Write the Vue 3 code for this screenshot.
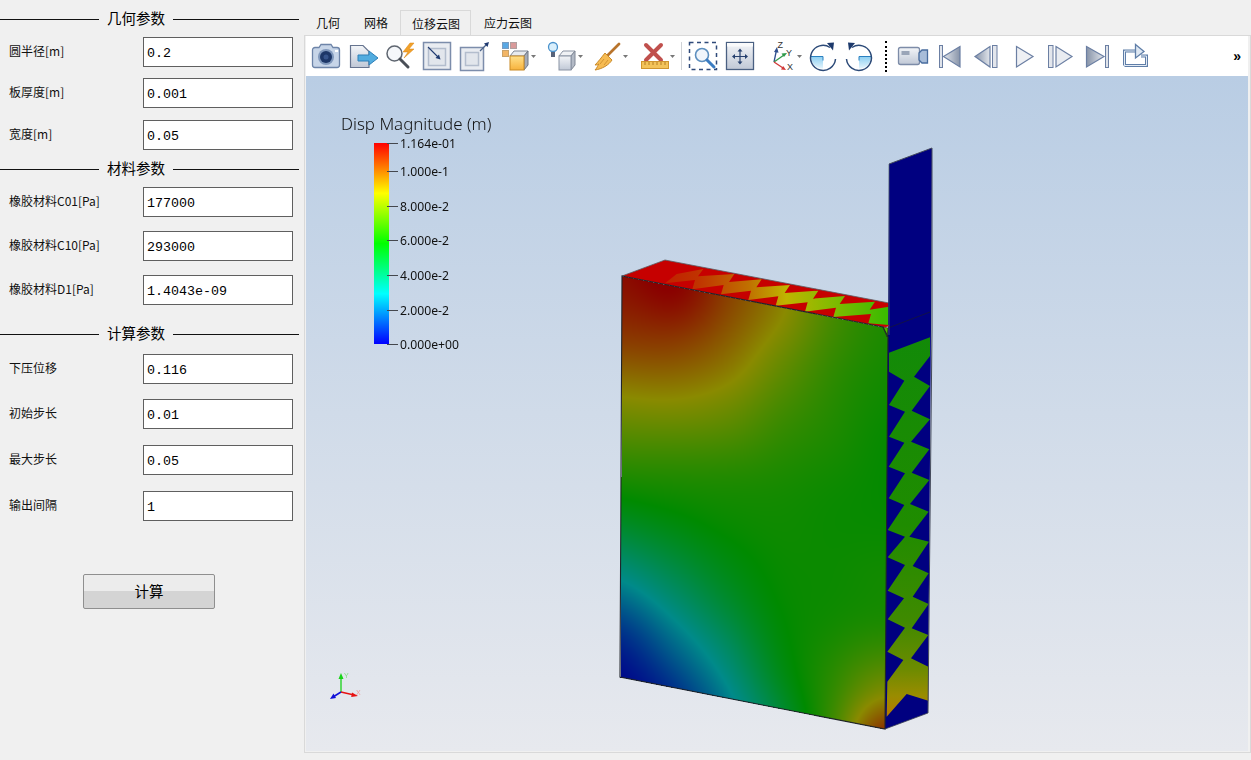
<template>
  <div class="app">
    <aside class="side">
      <template v-for="(g, gi) in groups" :key="gi">
        <h3 :class="['heading', g.cls]"><span>{{ g.title }}</span></h3>
        <div :class="['fields', g.cls]">
          <div v-for="f in g.fields" :key="f.label" class="row">
            <label class="lbl">{{ f.label }}</label>
            <div class="input"><span>{{ f.value }}</span></div>
          </div>
        </div>
      </template>
      <button class="calc" type="button">计算</button>
    </aside>

    <main class="right">
      <nav class="tabs">
        <div v-for="t in tabs" :key="t" :class="['tab', { active: t === '位移云图' }]">{{ t }}</div>
      </nav>
      <div class="pane">
        <div class="toolbar">
          <svg class="defs" width="0" height="0">
            <defs>
              <linearGradient id="steel" x1="0" y1="0" x2="0" y2="1">
                <stop offset="0" stop-color="#f3f5f8" />
                <stop offset="1" stop-color="#c0c8d6" />
              </linearGradient>
              <linearGradient id="darkSteel" x1="1" y1="0" x2="0" y2="0">
                <stop offset="0" stop-color="#e2e6ec" />
                <stop offset="1" stop-color="#8793a8" />
              </linearGradient>
              <linearGradient id="darkSteelR" x1="0" y1="0" x2="1" y2="0">
                <stop offset="0" stop-color="#e2e6ec" />
                <stop offset="1" stop-color="#8793a8" />
              </linearGradient>
              <linearGradient id="amber" x1="0" y1="0" x2="0" y2="1">
                <stop offset="0" stop-color="#ffe08a" />
                <stop offset="1" stop-color="#f7b23c" />
              </linearGradient>
              <linearGradient id="wedge" x1="0" y1="0" x2="0" y2="1">
                <stop offset="0" stop-color="#8fd0f2" />
                <stop offset="1" stop-color="#e4f4fc" />
              </linearGradient>
            </defs>
          </svg>

          <!-- camera -->
          <svg class="tb" width="37" height="40">
            <path d="M4.500 14a2.500 2.500 0 0 1 2.500-2.500h4l2-3h10l2 3h4a2.500 2.500 0 0 1 2.500 2.500v15a2.500 2.500 0 0 1-2.500 2.500H7a2.500 2.500 0 0 1-2.500-2.500Z" fill="#c7d5e8" stroke="#6d84a8" stroke-width="1.300" />
            <circle cx="18" cy="21" r="8" fill="#7f97bb" />
            <circle cx="18" cy="21" r="6" fill="#1d3768" />
            <circle cx="18" cy="21" r="2.500" fill="#37558c" />
            <rect x="27" y="14" width="3" height="2" fill="#fff" />
          </svg>
          <!-- export -->
          <svg class="tb" width="37" height="40">
            <path d="M5.500 9.500H18l6 6v16H5.500Z" fill="url(#steel)" stroke="#66748f" stroke-width="1.200" />
            <path d="M13 19h11v-4l9 7-9 7v-4H13Z" fill="#52acdf" stroke="#2f80b8" />
          </svg>
          <!-- find data -->
          <svg class="tb" width="37" height="40">
            <circle cx="12.500" cy="17.500" r="7.500" fill="#f5f7fa" stroke="#5f6670" stroke-width="1.500" />
            <path d="M18 23l8 8" stroke="#4a4f57" stroke-width="3" stroke-linecap="round" />
            <path d="M28 7l-7 9h5l-4 6 10-9h-5l5-6Z" fill="#f2a12a" stroke="#d98616" stroke-width=".5" />
          </svg>
          <!-- reset zoom in -->
          <svg class="tb" width="37" height="40">
            <rect x="4.500" y="6.500" width="27" height="27" fill="#e9ecf1" stroke="#7c8dab" stroke-width="1.500" />
            <rect x="9.500" y="12.500" width="17" height="17" fill="#e2e6ec" stroke="#b3bdcd" stroke-width="1.500" />
            <path d="M9 11l10 10" stroke="#1f3a70" stroke-width="1.100" />
            <path d="M21.500 23.500l-5-1.500 3.500-3.500Z" fill="#1f3a70" />
          </svg>
          <!-- reset zoom out -->
          <svg class="tb" width="37" height="40">
            <rect x="4.500" y="11.500" width="23" height="23" fill="#e9ecf1" stroke="#7c8dab" stroke-width="1.500" />
            <rect x="9.500" y="16.500" width="13" height="13" fill="#e2e6ec" stroke="#b3bdcd" stroke-width="1.500" />
            <path d="M24 15l6-6" stroke="#4a6288" stroke-width="1.200" />
            <path d="M33 6l-1.500 5-3.500-3.500Z" fill="#1f3a70" />
          </svg>
          <!-- cube with colored cells -->
          <svg class="tb" width="46" height="40">
            <rect x="9.500" y="6.500" width="6" height="6" fill="#59a8e4" stroke="#7a9cc0" />
            <rect x="17.500" y="6.500" width="6" height="6" fill="#d99a9a" stroke="#b0a0a0" />
            <rect x="9.500" y="14.500" width="6" height="6" fill="#f2b565" stroke="#c9a26a" />
            <path d="M17 20l4-5h14l-4 5Z" fill="#e8ebef" stroke="#7f8796" />
            <path d="M31 20l4-5v14l-4 5Z" fill="#a4abb8" stroke="#6f7684" />
            <rect x="17" y="20" width="14" height="14" fill="url(#amber)" stroke="#c98a24" />
            <path d="M38 19h5l-2.500 3Z" fill="#777" />
          </svg>
          <!-- light with cube -->
          <svg class="tb" width="46" height="40">
            <circle cx="14" cy="11" r="4.500" fill="#d9effc" stroke="#4a92cc" stroke-width="1.300" />
            <rect x="12" y="16" width="4" height="5" fill="#57637a" />
            <path d="M20 20l4-5h12l-4 5Z" fill="#f0f2f5" stroke="#8a93a3" />
            <path d="M32 20l4-5v14l-4 5Z" fill="#b3bac6" stroke="#808896" />
            <rect x="20" y="20" width="12" height="14" fill="url(#steel)" stroke="#8a93a3" />
            <path d="M39 19h5l-2.500 3Z" fill="#777" />
          </svg>
          <!-- broom -->
          <svg class="tb" width="46" height="40">
            <path d="M34 8L23 19" stroke="#b8742c" stroke-width="2.800" stroke-linecap="round" />
            <path d="M20 17l7 7c-3 5-10 9-17 10 3-3 2-4 4-6-2 1-3 1-4 1 3-3 6-7 10-12Z" fill="#f6bb52" stroke="#c98a2a" />
            <path d="M19 23l-4 5M23 24l-4 5" stroke="#c98a2a" stroke-width=".8" />
            <path d="M38 19h5l-2.500 3Z" fill="#777" />
          </svg>
          <!-- ruler and x -->
          <svg class="tb" width="47" height="40">
            <path d="M15 9l15 15M30 9L15 24" stroke="#c0504d" stroke-width="4" stroke-linecap="round" />
            <rect x="10.500" y="25.500" width="27" height="7" fill="#f3c35a" stroke="#d0952e" />
            <path d="M14 26v3M18 26v3M22 26v3M26 26v3M30 26v3M34 26v3" stroke="#b57f22" />
            <path d="M39 19h5l-2.500 3Z" fill="#777" />
          </svg>
          <i class="sep"></i>
          <!-- zoom to box -->
          <svg class="tb" width="37" height="40">
            <rect x="4.500" y="6.500" width="27" height="27" fill="none" stroke="#2f4a7a" stroke-width="1.500" stroke-dasharray="4 3.500" />
            <circle cx="17" cy="19" r="6.500" fill="#f0f5fb" stroke="#5d8fbf" stroke-width="1.600" />
            <path d="M22 24l7 7" stroke="#3a7cc2" stroke-width="3" stroke-linecap="round" />
          </svg>
          <!-- pan / fit -->
          <svg class="tb" width="37" height="40">
            <rect x="4.500" y="6.500" width="27" height="27" fill="url(#steel)" stroke="#4a6082" stroke-width="1.300" />
            <rect x="5" y="7" width="26" height="3.500" fill="#f9fafb" />
            <path d="M18 15v11M12.500 20.500h11" stroke="#26406e" stroke-width="1.200" />
            <path d="M18 12.500l-2.500 3h5ZM18 28.500l-2.500-3h5ZM10 20.500l3-2.500v5ZM26 20.500l-3-2.500v5Z" fill="#26406e" />
          </svg>
          <!-- axes -->
          <svg class="tb" width="45" height="40">
            <path d="M15 26l2.500-12" stroke="#2f4f8f" stroke-width="1.300" />
            <path d="M18 11l-3 5 4.500.8Z" fill="#2f4f8f" />
            <path d="M15 26l10-7" stroke="#2f9a4a" stroke-width="1.300" />
            <path d="M28 17l-5.500.5 2.500 3.500Z" fill="#2f9a4a" />
            <path d="M15 26l9 6" stroke="#d23a3a" stroke-width="1.300" />
            <path d="M27 34l-5-.5 2.200-3.500Z" fill="#d23a3a" />
            <text x="18.500" y="12" class="axl">Z</text>
            <text x="27" y="20" class="axl">Y</text>
            <text x="28" y="34" class="axl">X</text>
            <path d="M38 19h5l-2.500 3Z" fill="#777" />
          </svg>
          <!-- rotate cw -->
          <svg class="tb" width="37" height="40">
            <path d="M7 21h12v11.500a12 12 0 0 1-12-11.500Z" fill="url(#wedge)" />
            <path d="M7 20.500h12v4" fill="none" stroke="#2a80c0" stroke-width="1" />
            <path d="M26 11.500A12.500 12.500 0 1 0 31.500 23" fill="none" stroke="#2c4a78" stroke-width="1.500" />
            <path d="M23 7l7-.5-1 8Z" fill="#1d3a6c" />
          </svg>
          <!-- rotate ccw -->
          <svg class="tb" width="37" height="40">
            <path d="M30 21H18v11.500a12 12 0 0 0 12-11.500Z" fill="url(#wedge)" />
            <path d="M30 20.500H18v4" fill="none" stroke="#2a80c0" stroke-width="1" />
            <path d="M11 11.500A12.500 12.500 0 1 1 5.500 23" fill="none" stroke="#2c4a78" stroke-width="1.500" />
            <path d="M14 7l-7-.5 1 8Z" fill="#1d3a6c" />
          </svg>
          <i class="dots"></i>
          <!-- video camera -->
          <svg class="tb" width="37" height="40">
            <rect x="4.500" y="11.500" width="21" height="17" rx="2" fill="url(#steel)" stroke="#7d8ca8" stroke-width="1.300" />
            <rect x="7.500" y="15" width="8" height="4" fill="#9aa5b8" />
            <path d="M25 17l3-3h5.500v13H28l-3-3Z" fill="#a8bdd9" stroke="#486c9e" stroke-width="1.300" />
          </svg>
          <!-- first -->
          <svg class="tb" width="37" height="40">
            <rect x="8.500" y="9.500" width="3" height="22" fill="#dfe3ea" stroke="#6b7fa3" />
            <path d="M29 10.500L12.500 20.500 29 31Z" fill="url(#darkSteelR)" stroke="#6b7fa3" stroke-width="1.200" />
          </svg>
          <!-- prev -->
          <svg class="tb" width="37" height="40">
            <path d="M22 10.500L7 20.500 22 31Z" fill="url(#darkSteel)" stroke="#6b7fa3" stroke-width="1.200" />
            <rect x="24.500" y="9.500" width="4.500" height="22" fill="#e3e6ec" stroke="#6b7fa3" />
          </svg>
          <!-- play -->
          <svg class="tb" width="37" height="40">
            <path d="M11.500 10.500L28 20.500 11.500 31Z" fill="#eef0f4" stroke="#6b7fa3" stroke-width="1.200" />
          </svg>
          <!-- next -->
          <svg class="tb" width="37" height="40">
            <rect x="6.500" y="9.500" width="4.500" height="22" fill="#e3e6ec" stroke="#6b7fa3" />
            <path d="M14 10.500L30 20.500 14 31Z" fill="#e9ecf1" stroke="#6b7fa3" stroke-width="1.200" />
          </svg>
          <!-- last -->
          <svg class="tb" width="37" height="40">
            <path d="M7.500 10.500L25 20.500 7.500 31Z" fill="url(#darkSteel)" stroke="#6b7fa3" stroke-width="1.200" />
            <rect x="26.500" y="9.500" width="3" height="22" fill="#dfe3ea" stroke="#6b7fa3" />
          </svg>
          <!-- loop -->
          <svg class="tb" width="37" height="40">
            <path d="M8.500 29.500V15H20M25 20h5.500v9.500h-22" fill="none" stroke="#5f7ea8" stroke-width="3" />
            <path d="M8.500 29.500V15H20M25 20h5.500v9.500h-22" fill="none" stroke="#e3ebf5" stroke-width="1" />
            <path d="M19.500 8.500l8.500 7-8.500 6.500Z" fill="#dfe8f3" stroke="#5f7ea8" stroke-width="1.300" />
          </svg>
          <span class="more">»</span>
        </div>

        <div class="view">
          <canvas ref="faceCanvas" class="layer" width="942" height="675"></canvas>
          <svg class="layer" width="942" height="675" viewBox="306 76 942 675">
            <defs>
              <linearGradient id="bandTop" gradientUnits="userSpaceOnUse" x1="650" y1="0" x2="885" y2="0">
                <stop offset="0" stop-color="#c01a00" />
                <stop offset=".2" stop-color="#c03200" />
                <stop offset=".42" stop-color="#c07000" />
                <stop offset=".58" stop-color="#bfb400" />
                <stop offset=".78" stop-color="#80bb00" />
                <stop offset="1" stop-color="#3cbb00" />
              </linearGradient>
              <linearGradient id="zigGreen" gradientUnits="userSpaceOnUse" x1="0" y1="335" x2="0" y2="715">
                <stop offset="0" stop-color="#128a08" />
                <stop offset=".5" stop-color="#1f8c00" />
                <stop offset=".75" stop-color="#3f8a00" />
                <stop offset=".88" stop-color="#6d8b00" />
                <stop offset=".95" stop-color="#9a8c00" />
                <stop offset="1" stop-color="#b37a00" />
              </linearGradient>
            </defs>

            <!-- top face -->
            <polygon points="622,276 665,260 889,303 889,326 883,327" fill="#c60000" />
            <polygon :points="bandPts" fill="url(#bandTop)" />
            <path d="M622 276L665 260L889 303" fill="none" stroke="#5b5f66" stroke-width=".8" />

            <!-- side strip -->
            <polygon points="889,164 932,148 931,330 928,713 885,729 888,335" fill="#000080" />
            <polygon :points="zigPts" fill="url(#zigGreen)" />
            <polygon points="883,327 888,328 887,337" fill="#52b800" stroke="#222" stroke-width=".6" />
            <path d="M884 327L889 325.500" stroke="#d00000" stroke-width="1.200" />
            <path d="M888 328L930 312" stroke="#15153a" stroke-width=".8" fill="none" />
            <path d="M889 164L932 148V330L928 713" stroke="#43495a" stroke-width="1" fill="none" />
            <path d="M889 164V335" stroke="#566" stroke-width=".7" fill="none" />

            <!-- front face edges -->
            <path d="M622 276L883 327L888 337L885 729L620 677Z" fill="none" stroke="#20242a" stroke-width="1.100" />
            <path d="M885 729L928 713" stroke="#3a4050" stroke-width=".8" />

            <!-- little triad -->
            <path d="M341 692V678" stroke="#17d317" stroke-width="1.300" />
            <path d="M341 673l-2.500 6h5Z" fill="#17d317" />
            <path d="M341 692L354 695" stroke="#e81010" stroke-width="1.300" />
            <path d="M358 696l-6-3.500-.8 4.500Z" fill="#e81010" />
            <path d="M341 692L333 697" stroke="#1010d8" stroke-width="1.500" />
            <path d="M330 699l6-1-2.500-4.500Z" fill="#1010d8" />
            <text x="344" y="678" class="mini gy">Y</text>
            <text x="356" y="695" class="mini rx">X</text>
          </svg>

          <div class="legend">
            <div class="legend-title">Disp Magnitude (m)</div>
            <div class="legend-body">
              <div class="bar"></div>
              <div v-for="t in ticks" :key="t.label" class="tick" :style="{ top: t.y + 'px' }">
                <i></i><span>{{ t.label }}</span>
              </div>
            </div>
          </div>
        </div>
      </div>
    </main>
  </div>
</template>

<script setup>
import { onMounted, ref } from 'vue'

const groups = [
  {
    title: '几何参数',
    cls: 'g1',
    fields: [
      { label: '圆半径[m]', value: '0.2' },
      { label: '板厚度[m]', value: '0.001' },
      { label: '宽度[m]', value: '0.05' }
    ]
  },
  {
    title: '材料参数',
    cls: 'g2',
    fields: [
      { label: '橡胶材料C01[Pa]', value: '177000' },
      { label: '橡胶材料C10[Pa]', value: '293000' },
      { label: '橡胶材料D1[Pa]', value: '1.4043e-09' }
    ]
  },
  {
    title: '计算参数',
    cls: 'g3',
    fields: [
      { label: '下压位移', value: '0.116' },
      { label: '初始步长', value: '0.01' },
      { label: '最大步长', value: '0.05' },
      { label: '输出间隔', value: '1' }
    ]
  }
]

const tabs = ['几何', '网格', '位移云图', '应力云图']

// y is relative to the top of the colour bar
const ticks = [
  { label: '1.164e-01', y: 0 },
  { label: '1.000e-1', y: 28 },
  { label: '8.000e-2', y: 63 },
  { label: '6.000e-2', y: 97 },
  { label: '4.000e-2', y: 132 },
  { label: '2.000e-2', y: 167 },
  { label: '0.000e+00', y: 201 }
]

// traced from 3x crops, so map them back to page pixels
const toPage = (pts, ox, oy) => pts.map((p) => `${ox + p[0] / 3},${oy + p[1] / 3}`).join(' ')

// strip on the top face
const tops = [[265, 55], [358, 72], [440, 88], [525, 105], [610, 122], [690, 138], [780, 155]]
const lows = [[232, 118], [318, 133], [400, 150], [482, 167], [570, 185], [655, 201], [760, 220]]
const band = [[150, 100], [185, 72], [265, 57]]
tops.forEach((p, i) => {
  if (i > 0) band.push(p)
  band.push([p[0] - 16, p[1] + 24])
})
band.push([822, 170], [822, 225], [760, 220])
for (let i = lows.length - 1; i >= 0; i--) {
  const p = lows[i]
  if (i < lows.length - 1) band.push(p)
  band.push([p[0] + 8, p[1] - 28])
}
const bandPts = toPage(band, 615, 250)

// green zigzag on the side strip
const zig = [[147, 68], [270, 22], [270, 78], [222, 140], [270, 168], [215, 242], [270, 268], [213, 335], [268, 358], [215, 428], [268, 450], [210, 522], [266, 545], [208, 620], [267, 635], [218, 708], [266, 730], [218, 800], [266, 822], [215, 895], [265, 915], [213, 985], [265, 1010], [265, 1112], [200, 1092], [140, 1160], [142, 1055], [190, 990], [142, 965], [195, 893], [143, 868], [192, 805], [143, 782], [195, 705], [143, 682], [195, 620], [143, 600], [193, 525], [146, 505], [195, 430], [146, 410], [193, 338], [147, 320], [195, 245], [147, 225], [193, 152], [147, 125]]
const zigPts = toPage(zig, 840, 330)

// displacement on the front face, normalised, rows step .15 in w, columns step .2 in u
const field = [
  [0.98, 1.0, 0.88, 0.76, 0.62, 0.55],
  [0.9, 0.88, 0.8, 0.68, 0.58, 0.53],
  [0.75, 0.73, 0.68, 0.6, 0.55, 0.51],
  [0.6, 0.58, 0.56, 0.54, 0.52, 0.51],
  [0.45, 0.47, 0.5, 0.52, 0.52, 0.53],
  [0.26, 0.33, 0.42, 0.5, 0.53, 0.56],
  [0.08, 0.18, 0.3, 0.46, 0.58, 0.72],
  [0.0, 0.06, 0.2, 0.38, 0.62, 0.98]
]

const cr = (a, b, c, d, t) =>
  0.5 * (2 * b + (c - a) * t + (2 * a - 5 * b + 4 * c - d) * t * t + (3 * b - a - 3 * c + d) * t * t * t)

function sample(u, w) {
  const fx = Math.min(u / 0.2, 4.999)
  const fy = Math.min(w / 0.15, 6.999)
  const ix = Math.floor(fx)
  const iy = Math.floor(fy)
  const col = []
  for (let j = -1; j <= 2; j++) {
    const r = field[Math.max(0, Math.min(7, iy + j))]
    const at = (k) => r[Math.max(0, Math.min(5, k))]
    col.push(cr(at(ix - 1), at(ix), at(ix + 1), at(ix + 2), fx - ix))
  }
  return Math.max(0, Math.min(1, cr(col[0], col[1], col[2], col[3], fy - iy)))
}

const stops = [[0, 0, 255], [0, 255, 255], [0, 255, 0], [255, 255, 0], [255, 0, 0]]
function rainbow(v) {
  const s = Math.min(v * 4, 3.999)
  const i = Math.floor(s)
  const t = s - i
  return stops[i].map((c, k) => c + (stops[i + 1][k] - c) * t)
}

const faceCanvas = ref(null)

onMounted(() => {
  const ctx = faceCanvas.value.getContext('2d')
  const img = ctx.createImageData(942, 675)
  const shade = 0.54
  for (let y = 250; y < 740; y++) {
    for (let x = 610; x < 895; x++) {
      let u = (x - 621) / 266
      const w0 = (y - 276 - 52 * u) / 401
      const left = 622 - 2 * w0
      const right = 888 - 3 * w0
      u = (x - left) / (right - left)
      const w = (y - 276 - 52 * u) / 401
      if (u < 0 || u > 1 || w < 0 || w > 1) continue
      const [r, g, b] = rainbow(sample(u, w))
      const p = ((y - 76) * 942 + (x - 306)) * 4
      img.data[p] = r * shade
      img.data[p + 1] = g * shade
      img.data[p + 2] = b * shade
      img.data[p + 3] = 255
    }
  }
  ctx.putImageData(img, 0, 0)
})
</script>

<style>
html, body { margin: 0; background: #f0f0f0; }
</style>

<style scoped>
.app {
  display: flex;
  width: 1251px;
  height: 760px;
  overflow: hidden;
  background: #f0f0f0;
  color: #000;
  font-family: "Noto Sans CJK SC", "Liberation Sans", sans-serif;
}

/* left form */
.side { width: 304px; flex: none; padding-top: 10px; box-sizing: border-box; }
.heading {
  display: flex;
  align-items: center;
  gap: 8px;
  width: 299px;
  height: 18px;
  margin: 0;
  font-size: 14.5px;
  font-weight: 400;
  line-height: 18px;
  white-space: nowrap;
}
.heading span { margin-top: -2px; }
.heading::before { content: ""; width: 99px; height: 1px; background: #111; }
.heading::after { content: ""; flex: 1; height: 1px; background: #111; }
.heading.g2 { margin-top: 10px; }
.heading.g3 { margin-top: 20px; }
.fields { display: flex; flex-direction: column; margin-top: 9px; }
.fields.g1 { gap: 11px; }
.fields.g1 .row:last-child { margin-top: 1px; }
.fields.g2 { gap: 14px; }
.fields.g3 { gap: 16px; margin-top: 11px; }
.fields.g3 .row:nth-child(2) { margin-top: -1px; }
.row { display: flex; align-items: center; height: 30px; padding-left: 9px; }
.lbl { width: 134px; font-size: 12px; line-height: 16px; margin-top: -2px; color: #111; white-space: nowrap; }
.input {
  width: 150px;
  height: 30px;
  box-sizing: border-box;
  padding: 3px 3px 0;
  border: 1px solid #5f5f5f;
  background: #fff;
  font-family: "Liberation Mono", monospace;
  font-size: 13.33px;
  line-height: 26px;
}
.calc {
  display: block;
  width: 132px;
  height: 35px;
  margin: 53px 0 0 83px;
  padding: 0 0 2px;
  border: 1px solid #8f8f8f;
  border-radius: 2px;
  background: linear-gradient(#ececec 0, #ececec 50%, #d4d4d4 50%, #d4d4d4 100%);
  color: #000;
  font-family: inherit;
  font-size: 14.5px;
}

/* tabs */
.right { flex: 1; display: flex; flex-direction: column; padding-top: 10px; min-width: 0; }
.tabs { display: flex; height: 25px; font-size: 12px; line-height: 26px; white-space: nowrap; }
.tab { padding: 0 12px; box-sizing: border-box; height: 25px; color: #111; }
.tab.active { padding: 0 11px; width: 71px; border: 1px solid #d9d9d9; border-bottom: 0; line-height: 25px; background: #f0f0f0; margin-right: 1px; }
.pane {
  height: 718px;
  box-sizing: border-box;
  border: 1px solid #d9d9d9;
  padding: 0 2px 1px 1px;
  display: flex;
  flex-direction: column;
}

/* toolbar */
.toolbar { display: flex; align-items: center; height: 40px; flex: none; padding-left: 2px; background: #fff; position: relative; }
.defs { position: absolute; }
.tb { display: block; flex: none; }
.axl { font-family: "Liberation Sans", sans-serif; font-size: 9px; fill: #333; }
.sep { flex: none; width: 1px; height: 28px; margin: 0 3px; background: #cfd2d6; }
.dots { flex: none; width: 0; height: 31px; margin: 0 7px; border-left: 2px dotted #000; }
.more { margin-left: auto; padding-right: 7px; font-family: "Liberation Sans", sans-serif; font-size: 14px; font-weight: 700; line-height: 14px; }

/* viewport */
.view { position: relative; flex: 1; overflow: hidden; background: linear-gradient(#b9cde4, #e7e9ee); }
.layer { position: absolute; left: 0; top: 0; display: block; }
.mini { font-family: "Liberation Sans", sans-serif; font-size: 7px; }
.gy { fill: #7fe07f; }
.rx { fill: #f09a9a; }
.legend { position: absolute; left: 35px; top: 38px; font-family: "Noto Sans", sans-serif; color: #111; }
.legend-title { font-size: 16.9px; font-weight: 300; line-height: 20px; white-space: nowrap; }
.legend-body { position: relative; width: 160px; height: 202px; margin-top: 9px; }
.bar {
  position: absolute;
  left: 33px;
  top: 0;
  width: 15px;
  height: 201px;
  background: linear-gradient(#ff0000, #ffff00 25%, #00ff00 50%, #00ffff 75%, #0000ff);
}
.tick { position: absolute; left: 46px; display: flex; align-items: center; height: 0; font-size: 12.2px; white-space: nowrap; }
.tick i { width: 11px; height: 1px; margin-right: 2px; background: #44474d; }
</style>
